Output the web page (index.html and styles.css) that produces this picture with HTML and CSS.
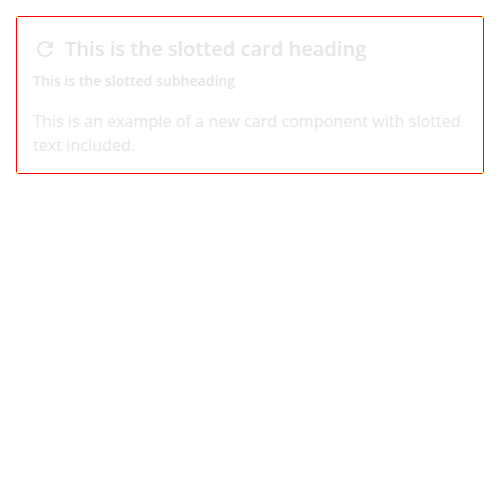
FILE: index.html
```html
<!DOCTYPE html>
<html lang="en">
<head>
<meta charset="utf-8">
<title>Card</title>
<link rel="stylesheet" href="styles.css">
</head>
<body>
<article class="card">
  <header class="card-header">
    <svg class="card-icon" viewBox="0 0 24 24" aria-hidden="true"><path d="M17.65 6.35A7.958 7.958 0 0 0 12 4c-4.42 0-7.99 3.58-7.99 8s3.57 8 7.99 8c3.73 0 6.84-2.55 7.73-6h-2.08A5.99 5.99 0 0 1 12 18c-3.31 0-6-2.69-6-6s2.69-6 6-6c1.66 0 3.14.69 4.22 1.78L13 11h7V4l-2.35 2.35z"/></svg>
    <h2 class="card-heading">This is the slotted card heading</h2>
  </header>
  <h3 class="card-subheading">This is the slotted subheading</h3>
  <p class="card-text">This is an example of a new card component with slotted text included.</p>
</article>
</body>
</html>
```
FILE: styles.css
```css
body {
  margin: 16px;
  background: #fff;
  font-family: "Open Sans", sans-serif;
}

.card {
  position: relative;
  box-sizing: border-box;
  height: 158px;
  padding: 16px;
  border: 1px solid #f00;
  border-radius: 2px;
  color: #e6e6e6;
}

/* yellow corner accents over the red border */
.card::after {
  content: "";
  position: absolute;
  inset: -1px;
  border-radius: 2px;
  background:
    linear-gradient(#ff0, #ff0) 0 0 / 2px 2px no-repeat,
    linear-gradient(#ff0, #ff0) 100% 0 / 2px 2px no-repeat,
    linear-gradient(#ff0, #ff0) 0 100% / 2px 2px no-repeat,
    linear-gradient(#ff0, #ff0) 100% 100% / 2px 2px no-repeat;
  pointer-events: none;
}

.card-header {
  display: flex;
  align-items: center;
  gap: 8px;
  height: 32px;
}

.card-icon {
  width: 24px;
  height: 24px;
  fill: currentColor;
}

.card-heading {
  margin: 0;
  font-size: 20px;
  font-weight: 600;
  line-height: 32px;
  letter-spacing: 0.03px;
}

.card-subheading {
  margin: 4px 0 16px;
  font-size: 14px;
  font-weight: 600;
  line-height: 24px;
  letter-spacing: 0.03px;
}

.card-text {
  margin: 0;
  font-size: 16px;
  line-height: 24px;
  letter-spacing: 0.08px;
}
```
